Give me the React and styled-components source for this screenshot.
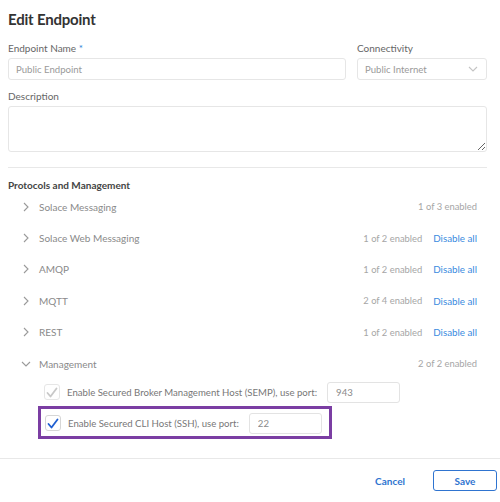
import React from "react";
import styled, { createGlobalStyle } from "styled-components";

const GlobalStyle = createGlobalStyle`
	html, body {
		margin: 0;
		padding: 0;
		background: #ffffff;
	}
	body {
		font-family: Lato, "Open Sans", sans-serif;
		color: #333333;
	}
	* {
		box-sizing: border-box;
	}
`;

const protocols = [
	{ name: "Solace Messaging", count: "1 of 3 enabled", disable: false },
	{ name: "Solace Web Messaging", count: "1 of 2 enabled", disable: true },
	{ name: "AMQP", count: "1 of 2 enabled", disable: true },
	{ name: "MQTT", count: "2 of 4 enabled", disable: true },
	{ name: "REST", count: "1 of 2 enabled", disable: true },
];

const ChevronRight = () => (
	<svg width="6" height="10" viewBox="0 0 6 10">
		<path d="M1 1 L5 5 L1 9" fill="none" stroke="#9a9a9a" strokeWidth="1.1" />
	</svg>
);

const ChevronDown = ({ color = "#9a9a9a" }) => (
	<svg width="10" height="6" viewBox="0 0 10 6">
		<path d="M1 1 L5 5 L9 1" fill="none" stroke={color} strokeWidth="1.1" />
	</svg>
);

const Check = ({ color }) => (
	<svg width="12" height="11" viewBox="0 0 12 11">
		<path d="M1.5 6 L4.5 9.5 L10.5 1.5" fill="none" stroke={color} strokeWidth="1.8" strokeLinecap="round" strokeLinejoin="round" />
	</svg>
);

const App = () => {
	return (
		<>
			<GlobalStyle />
			<Modal>
				<Body>
					<Title>Edit Endpoint</Title>
					<FieldRow>
						<Field>
							<Label>
								Endpoint Name <Req>*</Req>
							</Label>
							<TextInput placeholder="Public Endpoint" />
						</Field>
						<Field>
							<Label>Connectivity</Label>
							<Select>
								<span>Public Internet</span>
								<ChevronDown color="#c4c4c4" />
							</Select>
						</Field>
					</FieldRow>
					<Field>
						<Label>Description</Label>
						<TextArea />
					</Field>
					<Divider />
					<SectionTitle>Protocols and Management</SectionTitle>
					{protocols.map((p) => (
						<ProtoRow key={p.name}>
							<Toggle>
								<ChevronRight />
							</Toggle>
							<ProtoName>{p.name}</ProtoName>
							<Count>{p.count}</Count>
							{p.disable && <LinkBtn>Disable all</LinkBtn>}
						</ProtoRow>
					))}
					<ProtoRow>
						<Toggle>
							<ChevronDown />
						</Toggle>
						<ProtoName>Management</ProtoName>
						<Count>2 of 2 enabled</Count>
					</ProtoRow>
					<OptionList>
						<OptionRow>
							<CheckBox disabled>
								<Check color="#c8c8c8" />
							</CheckBox>
							<OptionText>Enable Secured Broker Management Host (SEMP), use port:</OptionText>
							<PortInput defaultValue="943" />
						</OptionRow>
						<Highlight>
							<CheckBox>
								<Check color="#1f5fd1" />
							</CheckBox>
							<OptionText>Enable Secured CLI Host (SSH), use port:</OptionText>
							<PortInput defaultValue="22" />
						</Highlight>
					</OptionList>
				</Body>
				<Footer>
					<CancelBtn>Cancel</CancelBtn>
					<SaveBtn>Save</SaveBtn>
				</Footer>
			</Modal>
		</>
	);
};
export default App;

const Modal = styled.div`
	width: 500px;
	height: 502px;
	display: flex;
	flex-direction: column;
	background: #ffffff;
`;

const Body = styled.div`
	display: flex;
	flex-direction: column;
	padding: 9px 13px 0 8px;
`;

const Title = styled.h1`
	margin: 0 0 13px;
	font-size: 15px;
	line-height: 20px;
	font-weight: 700;
	letter-spacing: -0.2px;
	color: #333333;
`;

const FieldRow = styled.div`
	display: grid;
	grid-template-columns: 338px 130px;
	column-gap: 11px;
	margin-bottom: 10px;
`;

const Field = styled.div`
	display: flex;
	flex-direction: column;
`;

const Label = styled.label`
	font-size: 10px;
	line-height: 12px;
	color: #666666;
	margin-bottom: 4px;
`;

const Req = styled.span`
	color: #2f7fd8;
`;

const TextInput = styled.input`
	height: 22px;
	border: 1px solid #e6e6e6;
	border-radius: 3px;
	padding: 0 7px;
	font-family: inherit;
	font-size: 9.6px;
	color: #444444;
	outline: none;
	&::placeholder {
		color: #9a9a9a;
	}
`;

const Select = styled.div`
	height: 22px;
	border: 1px solid #e6e6e6;
	border-radius: 3px;
	padding: 0 8px 0 7px;
	display: flex;
	align-items: center;
	justify-content: space-between;
	font-size: 9.6px;
	color: #9a9a9a;
`;

const TextArea = styled.textarea`
	height: 46px;
	border: 1px solid #e6e6e6;
	border-radius: 3px;
	resize: vertical;
	font-family: inherit;
	font-size: 10px;
	outline: none;
`;

const Divider = styled.hr`
	border: none;
	border-top: 1px solid #e8e8e8;
	margin: 15px 0 11px;
`;

const SectionTitle = styled.div`
	font-size: 10px;
	line-height: 12px;
	font-weight: 700;
	color: #444444;
`;

const ProtoRow = styled.div`
	display: flex;
	align-items: center;
	height: 31.4px;
	padding: 0 10px 0 4px;
	font-size: 10px;
`;

const Toggle = styled.span`
	width: 27px;
	flex: none;
	display: flex;
	align-items: center;
	justify-content: center;
`;

const ProtoName = styled.span`
	flex: 1;
	color: #8a8a8a;
`;

const Count = styled.span`
	font-size: 9.4px;
	color: #a6a6a6;
`;

const LinkBtn = styled.span`
	margin-left: 11px;
	color: #3a8be0;
	font-size: 9.8px;
`;

const OptionList = styled.div`
	display: flex;
	flex-direction: column;
	gap: 3px;
	padding-left: 36px;
	margin-top: 2px;
`;

const OptionRow = styled.div`
	display: flex;
	align-items: center;
	height: 22px;
	font-size: 9.6px;
`;

const Highlight = styled(OptionRow)`
	align-self: flex-start;
	height: 33px;
	margin-left: -6px;
	padding: 1px 7px 0 4px;
	border: 3px solid #7b3ea3;
`;

const CheckBox = styled.span`
	width: 16px;
	height: 16px;
	flex: none;
	border: 1px solid ${({ disabled }) => (disabled ? "#e6e6e6" : "#d6d6d6")};
	border-radius: 3px;
	background: #ffffff;
	display: flex;
	align-items: center;
	justify-content: center;
	margin-right: 7px;
`;

const OptionText = styled.span`
	color: #777777;
	margin-right: 10px;
	white-space: nowrap;
`;

const PortInput = styled.input`
	width: 73px;
	height: 21px;
	border: 1px solid #e3e3e3;
	border-radius: 3px;
	padding: 0 8px;
	font-family: inherit;
	font-size: 9.6px;
	color: #8a8a8a;
	outline: none;
`;

const Footer = styled.div`
	margin-top: auto;
	border-top: 1px solid #e8e8e8;
	height: 44px;
	display: flex;
	align-items: center;
	justify-content: flex-end;
	gap: 28px;
	padding: 0 3px 0 0;
`;

const CancelBtn = styled.span`
	font-size: 10px;
	font-weight: 700;
	color: #2f74d0;
`;

const SaveBtn = styled.button`
	width: 64px;
	height: 21px;
	border: 1.5px solid #2f74d0;
	border-radius: 3px;
	background: #ffffff;
	font-family: inherit;
	font-size: 10px;
	font-weight: 700;
	color: #2f74d0;
`;
